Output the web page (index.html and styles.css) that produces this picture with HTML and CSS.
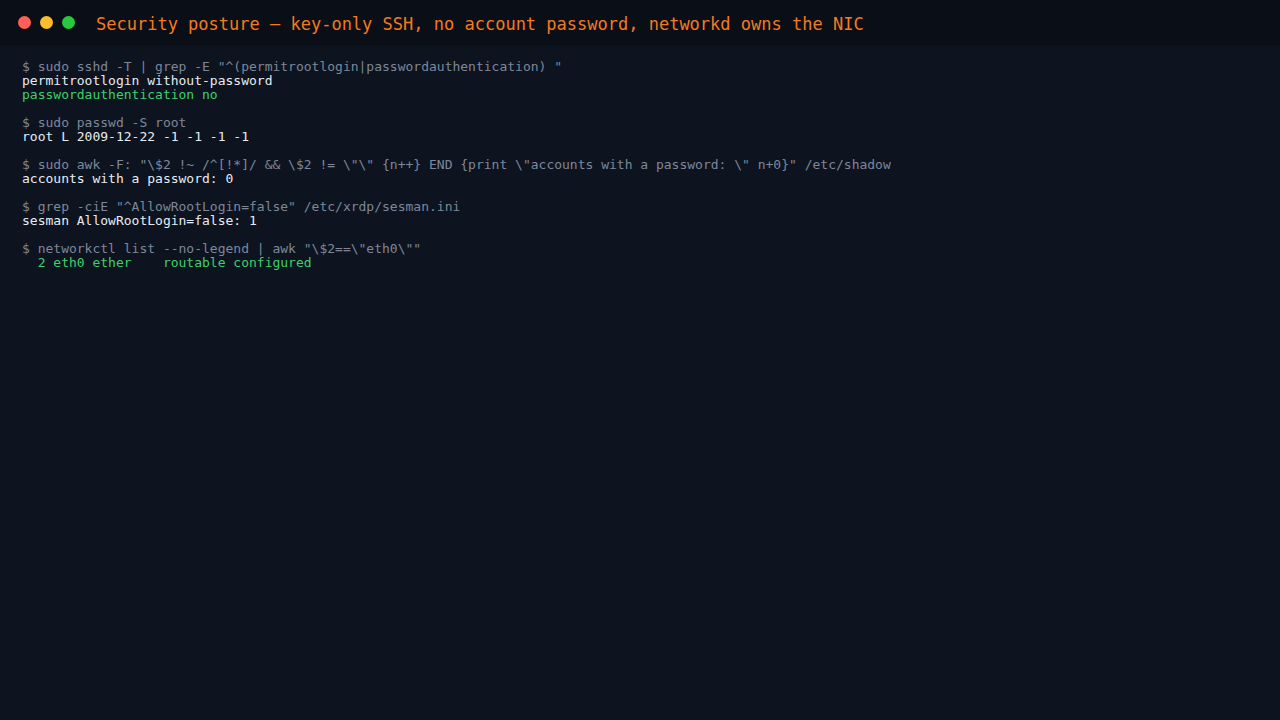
FILE: index.html
```html
<!DOCTYPE html>
<html>
<head>
<meta charset="utf-8">
<link rel="stylesheet" href="styles.css">
</head>
<body>
<div class="window">
  <header class="titlebar">
    <div class="dots">
      <span class="dot red"></span>
      <span class="dot yellow"></span>
      <span class="dot green"></span>
    </div>
    <h1 class="title">Security posture — key-only SSH, no account password, networkd owns the NIC</h1>
  </header>
  <main class="term">
    <div class="block">
      <div class="cmd">$ sudo sshd -T | grep -E "^(permitrootlogin|passwordauthentication) "</div>
      <div class="out">permitrootlogin without-password</div>
      <div class="ok">passwordauthentication no</div>
    </div>
    <div class="block">
      <div class="cmd">$ sudo passwd -S root</div>
      <div class="out">root L 2009-12-22 -1 -1 -1 -1</div>
    </div>
    <div class="block">
      <div class="cmd">$ sudo awk -F: "\$2 !~ /^[!*]/ &amp;&amp; \$2 != \"\" {n++} END {print \"accounts with a password: \" n+0}" /etc/shadow</div>
      <div class="out">accounts with a password: 0</div>
    </div>
    <div class="block">
      <div class="cmd">$ grep -ciE "^AllowRootLogin=false" /etc/xrdp/sesman.ini</div>
      <div class="out">sesman AllowRootLogin=false: 1</div>
    </div>
    <div class="block">
      <div class="cmd">$ networkctl list --no-legend | awk "\$2==\"eth0\""</div>
      <div class="ok">  2 eth0 ether    routable configured</div>
    </div>
  </main>
</div>
</body>
</html>
```
FILE: styles.css
```css
* { box-sizing: border-box; }
html, body {
  margin: 0;
  padding: 0;
  background: #0d1420;
  width: 1280px;
  height: 720px;
  overflow: hidden;
  font-family: "DejaVu Sans Mono", "Liberation Mono", monospace;
}
.window {
  display: flex;
  flex-direction: column;
  height: 720px;
}
.titlebar {
  display: flex;
  align-items: center;
  height: 45px;
  padding: 0 0 0 18px;
  background: #0a0e17;
}
.dots {
  display: flex;
  gap: 9px;
}
.dot {
  width: 13px;
  height: 13px;
  border-radius: 50%;
  display: block;
}
.red { background: #ff5f57; }
.yellow { background: #febc2e; }
.green { background: #28c840; }
.title {
  margin: 2px 0 0 21px;
  font-size: 17px;
  font-weight: normal;
  color: #f47a1f;
  white-space: pre;
}
.term {
  padding: 15px 22px;
  font-size: 13px;
  line-height: 14px;
  display: flex;
  flex-direction: column;
  gap: 14px;
}
.block div { white-space: pre; }
.cmd { color: #7d8799; }
.out { color: #e8ecf2; }
.ok { color: #3fcf6a; }
```
